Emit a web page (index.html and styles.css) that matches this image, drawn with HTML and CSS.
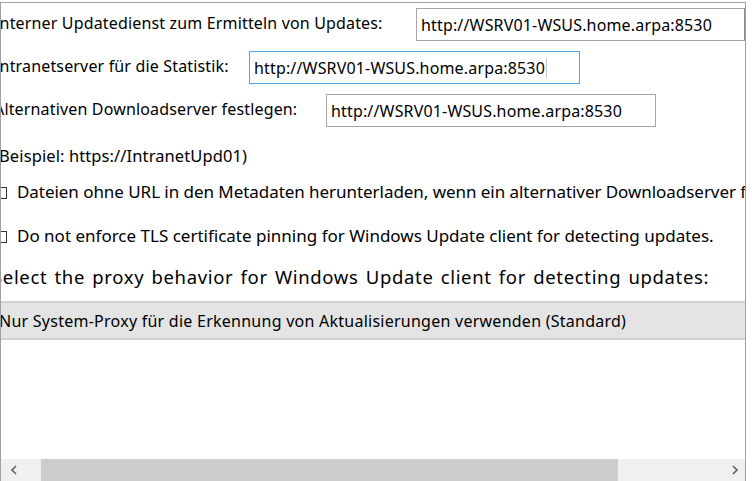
FILE: index.html
```html
<!DOCTYPE html>
<html lang="de">
<head>
<meta charset="utf-8">
<title>Windows Update</title>
<link rel="stylesheet" href="styles.css">
</head>
<body>
<div class="frame">
  <div class="viewport">
    <div class="content">
      <div class="row row1">
        <span class="label">Interner Updatedienst zum Ermitteln von Updates:</span>
        <div class="field">http://WSRV01-WSUS.home.arpa:8530</div>
      </div>
      <div class="row row2">
        <span class="label">Intranetserver für die Statistik:</span>
        <div class="field focused">http://WSRV01-WSUS.home.arpa:8530<span class="caret"></span></div>
      </div>
      <div class="row row3">
        <span class="label">Alternativen Downloadserver festlegen:</span>
        <div class="field">http://WSRV01-WSUS.home.arpa:8530</div>
      </div>
      <div class="line example">(Beispiel: https://IntranetUpd01)</div>
      <div class="line check check1"><span class="box"></span><span class="ctext c1">Dateien ohne URL in den Metadaten herunterladen, wenn ein alternativer Downloadserver festgelegt ist</span></div>
      <div class="line check check2"><span class="box"></span><span class="ctext c2">Do not enforce TLS certificate pinning for Windows Update client for detecting updates.</span></div>
      <div class="line select">Select the proxy behavior for Windows Update client for detecting updates:</div>
      <div class="combo">Nur System-Proxy für die Erkennung von Aktualisierungen verwenden (Standard)</div>
    </div>
  </div>
  <div class="hscroll">
    <div class="sbtn">
      <svg width="8" height="10" viewBox="0 0 8 10"><polyline points="6,1 2,5 6,9" fill="none" stroke="#606060" stroke-width="1.6"/></svg>
    </div>
    <div class="thumb"></div>
    <div class="track"></div>
    <div class="sbtn right">
      <svg width="8" height="10" viewBox="0 0 8 10"><polyline points="2,1 6,5 2,9" fill="none" stroke="#606060" stroke-width="1.6"/></svg>
    </div>
  </div>
</div>
</body>
</html>
```
FILE: styles.css
```css
* { box-sizing: border-box; }
html, body { margin: 0; padding: 0; background: #ffffff; overflow: hidden; }
body {
  width: 752px;
  height: 481px;
  font-family: "Noto Sans", "Open Sans", sans-serif;
  font-size: 16px;
  color: #000;
}
.frame {
  margin-top: 2px;
  width: 746px;
  height: 479px;
  border-top: 1px solid #a0a0a0;
  border-left: 1px solid #a0a0a0;
  border-right: 1px solid #a0a0a0;
  display: flex;
  flex-direction: column;
}
.viewport {
  flex: 0 0 456px;
  overflow: hidden;
  position: relative;
}
.content {
  margin-left: -7px;
  width: 1000px;
  padding-top: 5px;
  display: flex;
  flex-direction: column;
}
.row {
  display: flex;
  align-items: center;
  height: 33px;
  margin-bottom: 10px;
  white-space: nowrap;
}
.label {
  flex: none;
  letter-spacing: 0.16px;
  padding-bottom: 3px;
}
.row1 .label { width: 422px; }
.row2 .label { width: 255px; }
.row3 .label { width: 332px; }
.field {
  flex: none;
  width: 330px;
  height: 33px;
  border: 1px solid #a6a6a6;
  padding: 0 4px;
  display: flex;
  align-items: center;
  white-space: nowrap;
  letter-spacing: 0.16px;
  background: #fff;
}
.row1 .field { border-right: 2px solid #8a8a8a; }
.row2 .field { width: 331px; }
.field.focused { border-color: #5aa2e3; }
.caret {
  display: inline-block;
  width: 1px;
  height: 20px;
  margin-left: 1px;
  background: #c4c4c4;
}
.line {
  height: 22px;
  display: flex;
  align-items: center;
  white-space: nowrap;
}
.example {
  margin-top: 7px;
  font-size: 16.5px;
  letter-spacing: 0.1px;
}
.check1 { margin-top: 14px; }
.check2 { margin-top: 22px; }
.ctext { font-size: 17px; }
.c1 { letter-spacing: -0.05px; }
.select {
  margin-top: 19px;
  margin-left: -2px;
  font-size: 18.5px;
  letter-spacing: 0.65px;
  word-spacing: 1.8px;
}
.box {
  flex: none;
  width: 12px;
  height: 12px;
  border: 1px solid #333;
  margin: 4px 10px 0 1px;
}
.combo {
  margin-top: 14px;
  height: 39px;
  width: 900px;
  margin-left: -5px;
  padding-left: 10px;
  background: #e4e4e4;
  border-top: 2px solid #d2d2d2;
  border-bottom: 2px solid #d2d2d2;
  display: flex;
  align-items: center;
  white-space: nowrap;
  letter-spacing: 0.25px;
}
.hscroll {
  flex: 0 0 22px;
  display: flex;
  background: #f0f0f0;
}
.sbtn {
  flex: 0 0 40px;
  display: flex;
  align-items: center;
  padding-left: 9px;
}
.sbtn.right {
  flex: 0 0 22px;
  padding-left: 8px;
}
.thumb {
  flex: 0 0 577px;
  background: #cdcdcd;
}
.track { flex: 1; }
```
